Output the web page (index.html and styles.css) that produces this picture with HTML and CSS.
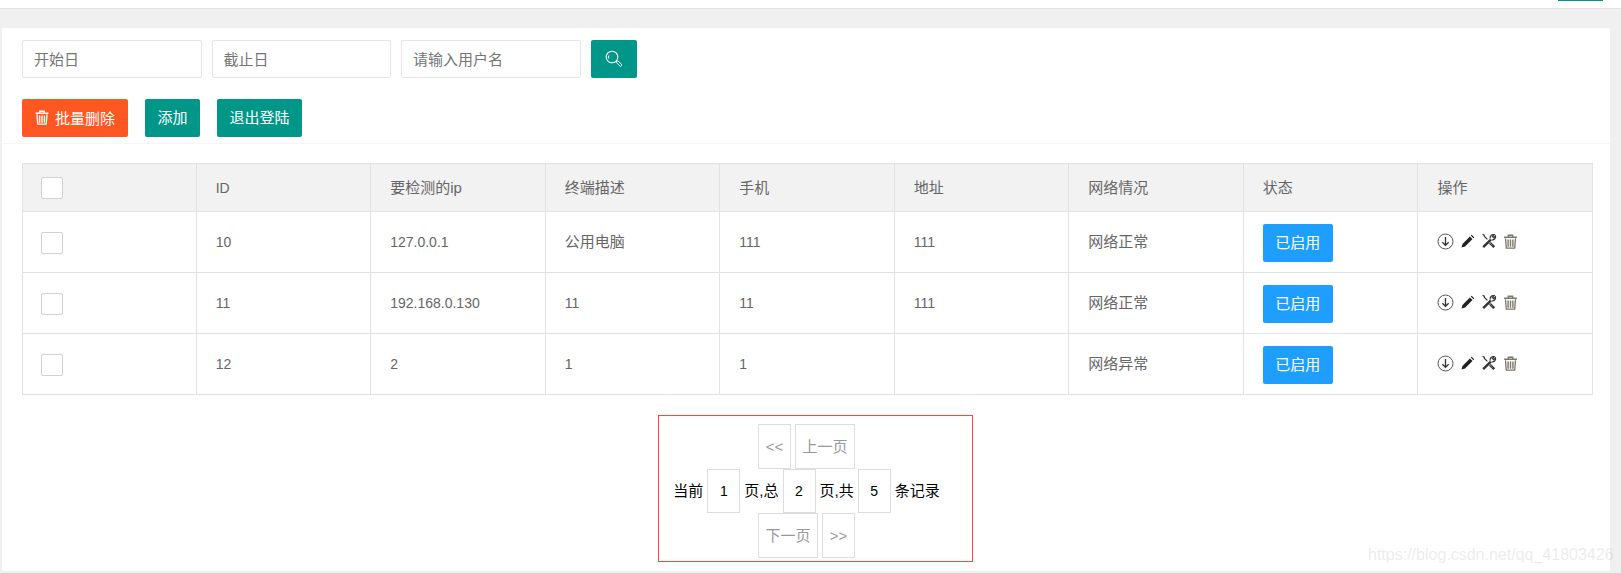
FILE: index.html
```html
<!DOCTYPE html>
<html lang="zh-CN">
<head>
  <meta charset="UTF-8">
  <title>终端列表</title>
  <link rel="stylesheet" href="styles.css">
</head>
<body>

  <div class="topbar"><span class="topbar-btn"></span></div>

  <div class="card">
    <div class="card-head">
      <form class="search-row">
        <input class="field" type="text" placeholder="开始日">
        <input class="field" type="text" placeholder="截止日">
        <input class="field" type="text" placeholder="请输入用户名">
        <button class="btn btn-search" type="button" aria-label="搜索">
          <svg width="18" height="18" viewBox="0 0 18 18" fill="none" stroke="#fff">
            <circle cx="7" cy="7" r="5.8" stroke-width="1.1"/>
            <path d="M3.9 8.6a3.6 3.6 0 0 1 0-3.2" stroke-width="1"/>
            <path d="M11.6 11.2l1.4-.4 4 4.2-1.6 1.6-4-4.2z" stroke-width="1"/>
          </svg>
        </button>
      </form>
      <div class="action-row">
        <button class="btn btn-danger" type="button">
          <svg class="trash-white" width="14" height="15" viewBox="0 0 14 15"><use href="#icon-trash"/></svg>
          批量删除
        </button>
        <button class="btn" type="button">添加</button>
        <button class="btn" type="button">退出登陆</button>
      </div>
    </div>

    <div class="card-body">
      <table class="grid">
        <thead>
          <tr>
            <th class="col-check"><span class="check"></span></th>
            <th class="num">ID</th>
            <th class="zh">要检测的ip</th>
            <th class="zh">终端描述</th>
            <th class="zh">手机</th>
            <th class="zh">地址</th>
            <th class="zh">网络情况</th>
            <th class="zh">状态</th>
            <th class="zh">操作</th>
          </tr>
        </thead>
        <tbody>
          <tr>
            <td><span class="check"></span></td>
            <td class="num">10</td>
            <td class="num">127.0.0.1</td>
            <td class="zh">公用电脑</td>
            <td class="num">111</td>
            <td class="num">111</td>
            <td class="zh">网络正常</td>
            <td><button class="btn btn-status" type="button">已启用</button></td>
            <td>
              <div class="ops">
                <svg width="17" height="17" viewBox="0 0 17 17"><use href="#icon-down"/></svg>
                <svg width="15" height="15" viewBox="0 0 15 15"><use href="#icon-pencil"/></svg>
                <svg width="16" height="16" viewBox="0 0 16 16"><use href="#icon-tools"/></svg>
                <svg class="trash-gray" width="15" height="15" viewBox="0 0 14 15"><use href="#icon-trash"/></svg>
              </div>
            </td>
          </tr>
          <tr>
            <td><span class="check"></span></td>
            <td class="num">11</td>
            <td class="num">192.168.0.130</td>
            <td class="num">11</td>
            <td class="num">11</td>
            <td class="num">111</td>
            <td class="zh">网络正常</td>
            <td><button class="btn btn-status" type="button">已启用</button></td>
            <td>
              <div class="ops">
                <svg width="17" height="17" viewBox="0 0 17 17"><use href="#icon-down"/></svg>
                <svg width="15" height="15" viewBox="0 0 15 15"><use href="#icon-pencil"/></svg>
                <svg width="16" height="16" viewBox="0 0 16 16"><use href="#icon-tools"/></svg>
                <svg class="trash-gray" width="15" height="15" viewBox="0 0 14 15"><use href="#icon-trash"/></svg>
              </div>
            </td>
          </tr>
          <tr>
            <td><span class="check"></span></td>
            <td class="num">12</td>
            <td class="num">2</td>
            <td class="num">1</td>
            <td class="num">1</td>
            <td></td>
            <td class="zh">网络异常</td>
            <td><button class="btn btn-status" type="button">已启用</button></td>
            <td>
              <div class="ops">
                <svg width="17" height="17" viewBox="0 0 17 17"><use href="#icon-down"/></svg>
                <svg width="15" height="15" viewBox="0 0 15 15"><use href="#icon-pencil"/></svg>
                <svg width="16" height="16" viewBox="0 0 16 16"><use href="#icon-tools"/></svg>
                <svg class="trash-gray" width="15" height="15" viewBox="0 0 14 15"><use href="#icon-trash"/></svg>
              </div>
            </td>
          </tr>
        </tbody>
      </table>

      <div class="pager">
        <div class="pager-row">
          <a class="page-link page-arrow">&lt;&lt;</a>
          <a class="page-link">上一页</a>
        </div>
        <div class="pager-row pager-info">
          <span>当前</span>
          <span class="page-num">1</span>
          <span>页,总</span>
          <span class="page-num">2</span>
          <span>页,共</span>
          <span class="page-num">5</span>
          <span>条记录</span>
        </div>
        <div class="pager-row">
          <a class="page-link">下一页</a>
          <a class="page-link page-arrow">&gt;&gt;</a>
        </div>
      </div>
    </div>
  </div>

  <div class="watermark">https://blog.csdn.net/qq_41803426</div>

  <!-- shared icons -->
  <svg class="icon-defs" width="0" height="0">
    <defs>
      <g id="icon-trash" fill="none" stroke="currentColor">
        <path d="M4.8 2.6V1.2h4.4v1.4M.6 3.2h12.8" stroke-width="1.4"/>
        <path d="M2 4.4l.8 9.8h8.4l.8-9.8" stroke-width="1.3"/>
        <path d="M4.6 5.4v7.4M7 5.4v7.4M9.4 5.4v7.4" stroke-width="1.4"/>
      </g>
      <g id="icon-down">
        <circle cx="8.5" cy="8.5" r="7.5" fill="none" stroke="#555" stroke-width="1"/>
        <path d="M8.5 4v8M5.4 9.2l3.1 3.2 3.1-3.2" fill="none" stroke="#333" stroke-width="1.3"/>
      </g>
      <g id="icon-pencil">
        <path d="M1.5 13.5l1-3.6 7.4-7.4 2.6 2.6-7.4 7.4z" fill="#222"/>
        <path d="M10.8 1.6l.9-.8 2.5 2.5-.8.9z" fill="#222"/>
      </g>
      <g id="icon-tools" fill="none" stroke="#333">
        <path d="M2.2 14.2L9.8 6.6" stroke-width="2.4"/>
        <path d="M9.2 5.6a3.3 3.3 0 0 1 4-4l-1.8 1.9 1.2 1.2 1.9-1.8a3.3 3.3 0 0 1-4 4" stroke-width="1.2"/>
        <path d="M1.6 1.2l1.6 1 .2 1.2 3 3M9.4 9.4l3.9 3.8-1 1-3.9-3.8" stroke-width="1.2"/>
      </g>
    </defs>
  </svg>

</body>
</html>
```

FILE: styles.css
```css
* {
  box-sizing: border-box;
}

body {
  margin: 0;
  height: 573px;
  overflow: hidden;
  background-color: #f0f0f0;
  font-family: "Liberation Sans", "Noto Sans CJK SC", sans-serif;
  font-size: 15px;
  color: #666;
}

.topbar {
  display: flex;
  justify-content: flex-end;
  height: 9px;
  padding-right: 18px;
  background-color: #fff;
  border-bottom: 1px solid #e4e4e4;
}

.topbar-btn {
  width: 45px;
  height: 1px;
  background-color: #009688;
}

.card {
  width: 1608px;
  height: 543px;
  margin: 19px 0 0 2px;
  background-color: #fff;
  border-radius: 2px;
}

.card-head {
  height: 116px;
  padding: 12px 20px 0;
  border-bottom: 1px solid #f6f6f6;
}

.search-row {
  display: flex;
  gap: 10px;
}

.field {
  width: 179.5px;
  height: 38px;
  padding: 0 11px;
  border: 1px solid #e6e6e6;
  border-radius: 2px;
  font: inherit;
  color: #666;
}

.field::placeholder {
  color: #757575;
}

.btn {
  height: 38px;
  padding: 0 12.5px 3px;
  border: none;
  border-radius: 2px;
  background-color: #009688;
  color: #fff;
  font: inherit;
  cursor: pointer;
}

.btn-search {
  display: flex;
  align-items: center;
  justify-content: center;
  width: 46px;
  padding: 0 0 0 1px;
}

.action-row {
  display: flex;
  gap: 17px;
  margin-top: 21px;
}

.btn-danger {
  display: flex;
  align-items: center;
  gap: 6px;
  padding: 0 13px 2px;
  background-color: #ff5722;
}

.trash-white {
  color: #fff;
}

.card-body {
  padding: 19px 17px 0 20px;
}

.grid {
  width: 1571px;
  table-layout: fixed;
  border-collapse: collapse;
}

.grid th,
.grid td {
  padding: 0 19px;
  border: 1px solid #e2e2e2;
  text-align: left;
  font-weight: normal;
}

.grid th {
  height: 48px;
  background-color: #f2f2f2;
}

.grid td {
  height: 61px;
}

.grid .col-check {
  width: 173.67px;
}

.grid .zh {
  padding-bottom: 3px;
}

.grid .num {
  font-size: 14px;
}

.check {
  display: block;
  width: 22px;
  height: 22px;
  margin-left: -1px;
  background-color: #fff;
  border: 1px solid #d2d2d2;
  border-radius: 2px;
}

.grid td .check {
  margin-top: 2px;
}

.btn-status {
  display: block;
  width: 70px;
  margin-top: 2px;
  padding: 0 0 3px;
  background-color: #1e9fff;
}

.ops {
  display: flex;
  align-items: center;
  gap: 6px;
  margin-top: -2px;
}

.trash-gray {
  color: #7d766a;
}

.pager {
  width: 315px;
  height: 147px;
  margin: 20px 0 0 636px;
  padding: 8px 18px 0 0;
  border: 1px solid #ff4444;
}

.pager-row {
  display: flex;
  justify-content: center;
  gap: 4px;
  height: 44.5px;
  color: #999;
}

.pager-info {
  align-items: center;
  color: #000;
}

.pager-info span {
  padding-bottom: 2px;
}

.page-link,
.pager-info .page-num {
  display: flex;
  align-items: center;
  justify-content: center;
  min-width: 33px;
  height: 44.5px;
  padding: 0 6.5px 2px;
  border: 1px solid #ddd;
}

.pager-info .page-num {
  width: 33px;
  padding: 0;
  font-size: 14px;
}

.page-link.page-arrow {
  padding-bottom: 0;
}

.watermark {
  position: absolute;
  left: 1368px;
  top: 546px;
  color: #000;
  opacity: 0.07;
  font-size: 16px;
}

.icon-defs {
  position: absolute;
}
```
